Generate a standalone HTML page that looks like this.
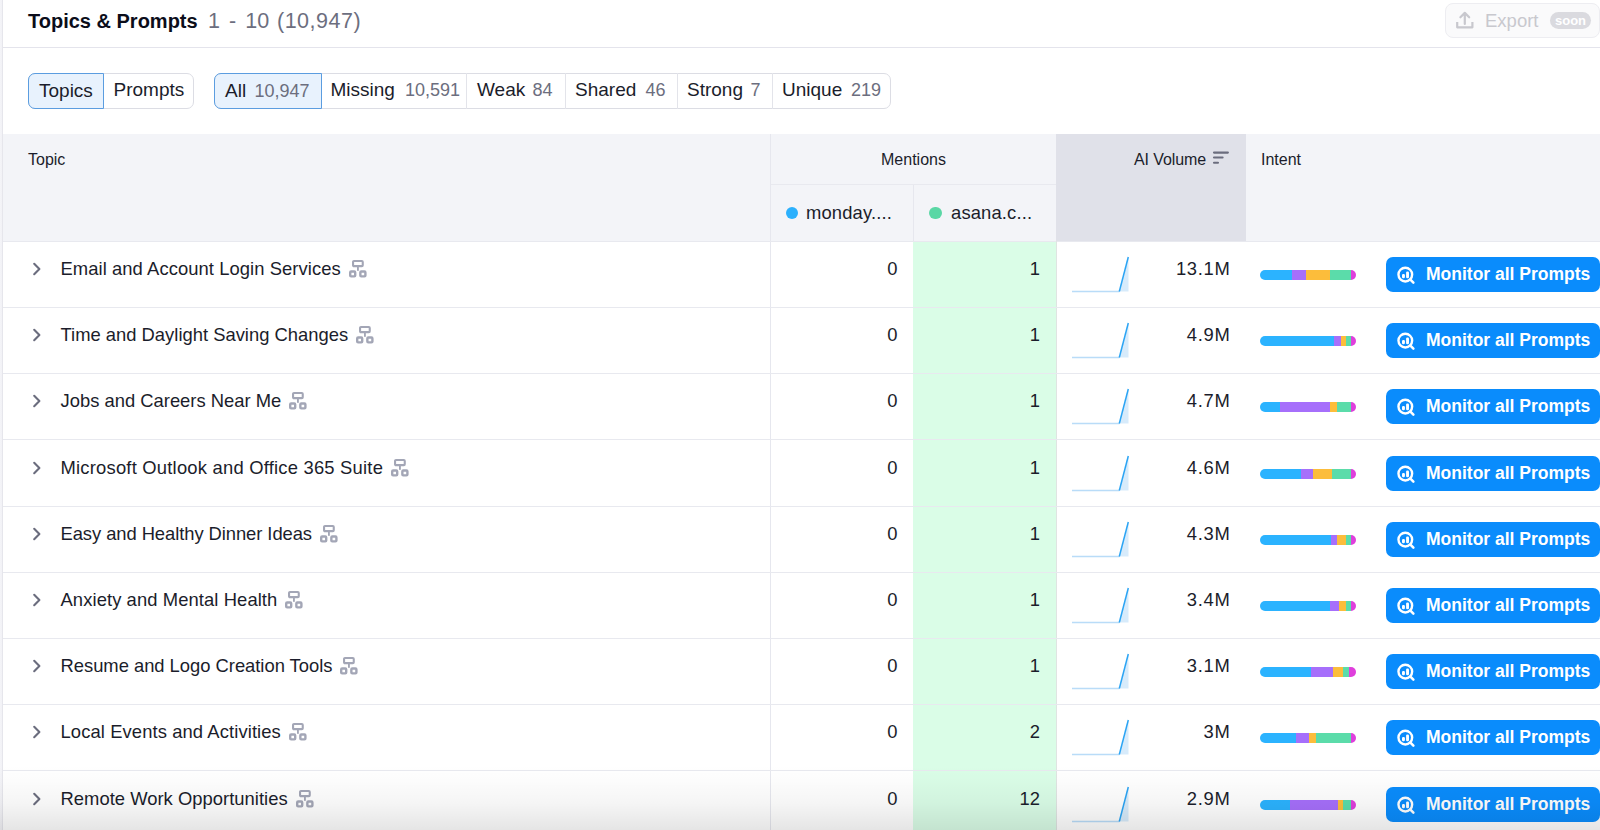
<!DOCTYPE html>
<html><head><meta charset="utf-8">
<style>
*{box-sizing:border-box;margin:0;padding:0}
html,body{width:1600px;height:830px;overflow:hidden;background:#fff}
body{position:relative;font-family:"Liberation Sans",sans-serif;color:#1b1d2b}
.abs{position:absolute}
.lstrip{left:0;top:0;width:3px;height:830px;background:linear-gradient(90deg,#f4f4f8 0,#f2f2f6 2px,#e6e6ec 2px,#e6e6ec 3px);z-index:5}
.title{left:28px;top:6px;font-size:20px;font-weight:bold;line-height:30px;white-space:nowrap;color:#0b0d1a}
.cnt{left:208px;top:6px;font-size:21.5px;line-height:30px;white-space:nowrap;color:#6c6e7e;word-spacing:3.1px}
.cnt b{font-weight:normal;margin-left:-1.3px;letter-spacing:0.5px}
.hline{left:3px;top:47px;width:1597px;height:1px;background:#e4e4ec}
.export{left:1445px;top:3px;width:155px;height:35px;border:1px solid #ededf1;border-radius:8px;background:#fafafb}
.export .ex{position:absolute;left:39px;top:4px;font-size:18.5px;line-height:26px;color:#c8c8ce}
.export .soon{position:absolute;left:104px;top:8px;width:41px;height:17px;border-radius:9px;background:#dadadf;color:#fff;font-size:13px;font-weight:bold;line-height:17px;text-align:center}
.export svg{position:absolute;left:9.2px;top:6.4px}
.seg{top:73px;height:36px;border:1px solid #dcdde4;border-radius:7px;background:#fff}
.seg div{position:absolute;top:-1px;height:36px;line-height:34.4px;font-size:19px;color:#1b1d2b;white-space:nowrap;border-left:1px solid #e3e4ea;padding:0 0 0 10px}
.seg div.first{border-left:none}
.seg div.on{background:#e8f2fd;border:1px solid #5b9de0;border-radius:7px 0 0 7px;padding-left:10px}
.seg span{position:absolute;top:0;font-size:18px;color:#6c6e7e}
.thead{left:3px;top:134px;width:1597px;height:107px;background:#f3f4f8}
.thvol{left:1056px;top:134px;width:190px;height:107px;background:#e0e1e9}
.th{top:150.5px;font-size:16px;line-height:18px;color:#1b1d2b;white-space:nowrap}
.vl{width:1px;background:#e6e7ee}
.hl{height:1px;background:#e8e9ef}
.dot{width:12.6px;height:12.6px;border-radius:50%}
.sub{top:202px;font-size:18.4px;line-height:22px;letter-spacing:0.15px;color:#1b1d2b;white-space:nowrap}
.green{left:913px;top:242px;width:143px;height:600px;background:#dafde7}
.row{position:absolute;left:3px;width:1597px;height:66px}
.row .chev{position:absolute;left:28.5px;top:21.3px}
.row .ttl{position:absolute;left:57.5px;top:16.6px;font-size:18.4px;line-height:22px;letter-spacing:0.07px;white-space:nowrap;color:#1b1d2b}
.row .net{display:inline-block;vertical-align:top;margin-left:8px;margin-top:2.5px}
.row .n1{position:absolute;right:calc(1597px - 894.5px);top:16.6px;font-size:18.4px;line-height:22px}
.row .n2{position:absolute;right:calc(1597px - 1037px);top:16.6px;font-size:18.4px;line-height:22px}
.row .spark{position:absolute;left:1069px;top:15px}
.row .vol{position:absolute;right:calc(1597px - 1227.5px);top:16.6px;font-size:18.4px;line-height:22px;letter-spacing:0.7px}
.row .bar{position:absolute;left:1257.3px;top:28.5px;width:96px;height:10px;border-radius:5px;overflow:hidden;display:flex}
.row .bar i{display:block;height:10px}
.row .btn{position:absolute;left:1383px;top:16px;width:214px;height:35px;border-radius:7px;background:#0a8cfc;color:#fff}
.row .btn span{position:absolute;left:40px;top:6px;font-size:17.5px;line-height:22px;font-weight:bold;white-space:nowrap}
.row .btn .mic{position:absolute;left:11px;top:8.5px}
.shade{position:absolute;left:0;top:765px;width:1600px;height:65px;background:linear-gradient(180deg,rgba(0,0,0,0) 0,rgba(0,0,0,0.012) 15px,rgba(0,0,0,0.04) 38px,rgba(0,0,0,0.1) 65px);z-index:10}
</style></head><body>
<div class="abs lstrip"></div>
<div class="abs title">Topics &amp; Prompts</div>
<div class="abs cnt">1 - 10 <b>(10,947)</b></div>
<div class="abs export"><svg width="20" height="20" viewBox="0 0 20 20"><path d="M9.8 14 V3 M5.4 7.3 L9.8 2.9 L14.2 7.3" fill="none" stroke="#c8c8ce" stroke-width="2.2" stroke-linecap="round" stroke-linejoin="round"/><path d="M2.2 12 V17.3 H17.4 V12" fill="none" stroke="#c8c8ce" stroke-width="2.2" stroke-linejoin="round"/></svg><div class="ex">Export</div><div class="soon">soon</div></div>
<div class="abs hline"></div>
<div class="abs seg" style="left:28px;width:166px">
<div class="on first" style="left:-1px;width:76px">Topics</div>
<div style="left:75px;width:90px;padding-left:9.5px;border-left:none">Prompts</div>
</div>
<div class="abs seg" style="left:214px;width:677px">
<div class="on first" style="left:-1px;width:107.5px">All<span style="left:39.5px">10,947</span></div>
<div style="left:106px;width:145px;padding-left:9.5px;border-left:none">Missing<span style="left:84px">10,591</span></div>
<div style="left:251px;width:99px">Weak<span style="left:65.5px">84</span></div>
<div style="left:350px;width:112px;padding-left:9px">Shared<span style="left:79.5px">46</span></div>
<div style="left:462px;width:95px;padding-left:9px">Strong<span style="left:72.5px">7</span></div>
<div style="left:557px;width:119px;padding-left:9px">Unique<span style="left:78px">219</span></div>
</div>
<div class="abs thead"></div>
<div class="abs thvol"></div>
<div class="abs hl" style="left:770px;top:184px;width:286px"></div>
<div class="abs vl" style="left:770px;top:134px;height:700px"></div>
<div class="abs vl" style="left:913px;top:185px;height:56px"></div>
<div class="abs th" style="left:28px">Topic</div>
<div class="abs th" style="left:881px">Mentions</div>
<div class="abs th" style="left:1134px;letter-spacing:-0.1px">AI Volume</div>
<svg class="abs" style="left:1211.5px;top:149.5px" width="18" height="16" viewBox="0 0 18 16"><path d="M2 2.6 H15.9 M2 7.5 H10.6 M2 12.8 H6" stroke="#6b6d7e" stroke-width="2.1" stroke-linecap="round"/></svg>
<div class="abs th" style="left:1261px">Intent</div>
<div class="abs dot" style="left:785.8px;top:206.9px;background:#2bb0fd"></div>
<div class="abs sub" style="left:806px">monday....</div>
<div class="abs dot" style="left:929px;top:206.9px;background:#5ad7a5"></div>
<div class="abs sub" style="left:951px">asana.c...</div>
<div class="abs hl" style="left:3px;top:241px;width:1597px"></div>
<div class="abs green"></div>
<div class="abs vl" style="left:1056px;top:241px;height:600px;background:#dfe5e2"></div>
<div class="hl abs" style="left:3px;width:1597px;top:307px"></div><div class="row" style="top:241px"><svg class="chev" width="10" height="14" viewBox="0 0 10 14"><path d="M2.2 1.8 L7.4 7 L2.2 12.2" fill="none" stroke="#6b6d7e" stroke-width="2.1" stroke-linecap="round" stroke-linejoin="round"/></svg><div class="ttl" style="letter-spacing:0.070px">Email and Account Login Services<svg class="net" width="18" height="18" viewBox="0 0 18 18"><g fill="none" stroke="#a3a6b6"><rect x="4.05" y="1.05" width="9.7" height="5.1" rx="0.9" stroke-width="2.1"/><rect x="1.2" y="11.55" width="5" height="4.85" rx="0.9" stroke-width="2.4"/><rect x="11.35" y="11.55" width="5.05" height="4.85" rx="0.9" stroke-width="2.4"/></g><rect x="8" y="7" width="1.85" height="3.8" fill="#a3a6b6"/></svg></div><div class="n1">0</div><div class="n2">1</div><svg class="spark" width="60" height="40" viewBox="0 0 60 40"><path d="M47.5 35.5 L56.5 1 L56.5 35.5 Z" fill="#d7ebfb"/><path d="M0 35.5 H47.5" stroke="#b9dcf8" stroke-width="1.3" fill="none"/><path d="M47.3 35.5 L56.3 1" stroke="#2ba4f4" stroke-width="1.5" fill="none"/></svg><div class="vol">13.1M</div><div class="bar"><i style="width:31.5px;background:#2bb3ff"></i><i style="width:14.5px;background:#a66ffb"></i><i style="width:24.0px;background:#fcbd3b"></i><i style="width:20.5px;background:#5bdcaa"></i><i style="flex:1;background:#df3fdc"></i></div><div class="btn"><svg class="mic" width="20" height="20" viewBox="0 0 20 20"><circle cx="8.3" cy="8.6" r="6.85" fill="none" stroke="#fff" stroke-width="2.4"/><path d="M13.4 13.6 L16.4 16.7" stroke="#fff" stroke-width="2.5" stroke-linecap="round"/><rect x="5" y="8.1" width="2.9" height="4.1" rx="1.2" fill="#fff"/><rect x="9.1" y="5.6" width="2.9" height="6.6" rx="1.2" fill="#fff"/></svg><span>Monitor all Prompts</span></div></div>
<div class="hl abs" style="left:3px;width:1597px;top:373px"></div><div class="row" style="top:307px"><svg class="chev" width="10" height="14" viewBox="0 0 10 14"><path d="M2.2 1.8 L7.4 7 L2.2 12.2" fill="none" stroke="#6b6d7e" stroke-width="2.1" stroke-linecap="round" stroke-linejoin="round"/></svg><div class="ttl" style="letter-spacing:-0.000px">Time and Daylight Saving Changes<svg class="net" width="18" height="18" viewBox="0 0 18 18"><g fill="none" stroke="#a3a6b6"><rect x="4.05" y="1.05" width="9.7" height="5.1" rx="0.9" stroke-width="2.1"/><rect x="1.2" y="11.55" width="5" height="4.85" rx="0.9" stroke-width="2.4"/><rect x="11.35" y="11.55" width="5.05" height="4.85" rx="0.9" stroke-width="2.4"/></g><rect x="8" y="7" width="1.85" height="3.8" fill="#a3a6b6"/></svg></div><div class="n1">0</div><div class="n2">1</div><svg class="spark" width="60" height="40" viewBox="0 0 60 40"><path d="M47.5 35.5 L56.5 1 L56.5 35.5 Z" fill="#d7ebfb"/><path d="M0 35.5 H47.5" stroke="#b9dcf8" stroke-width="1.3" fill="none"/><path d="M47.3 35.5 L56.3 1" stroke="#2ba4f4" stroke-width="1.5" fill="none"/></svg><div class="vol">4.9M</div><div class="bar"><i style="width:74.0px;background:#2bb3ff"></i><i style="width:6.3px;background:#a66ffb"></i><i style="width:5.4px;background:#fcbd3b"></i><i style="width:5.2px;background:#5bdcaa"></i><i style="flex:1;background:#df3fdc"></i></div><div class="btn"><svg class="mic" width="20" height="20" viewBox="0 0 20 20"><circle cx="8.3" cy="8.6" r="6.85" fill="none" stroke="#fff" stroke-width="2.4"/><path d="M13.4 13.6 L16.4 16.7" stroke="#fff" stroke-width="2.5" stroke-linecap="round"/><rect x="5" y="8.1" width="2.9" height="4.1" rx="1.2" fill="#fff"/><rect x="9.1" y="5.6" width="2.9" height="6.6" rx="1.2" fill="#fff"/></svg><span>Monitor all Prompts</span></div></div>
<div class="hl abs" style="left:3px;width:1597px;top:439px"></div><div class="row" style="top:373px"><svg class="chev" width="10" height="14" viewBox="0 0 10 14"><path d="M2.2 1.8 L7.4 7 L2.2 12.2" fill="none" stroke="#6b6d7e" stroke-width="2.1" stroke-linecap="round" stroke-linejoin="round"/></svg><div class="ttl" style="letter-spacing:0.000px">Jobs and Careers Near Me<svg class="net" width="18" height="18" viewBox="0 0 18 18"><g fill="none" stroke="#a3a6b6"><rect x="4.05" y="1.05" width="9.7" height="5.1" rx="0.9" stroke-width="2.1"/><rect x="1.2" y="11.55" width="5" height="4.85" rx="0.9" stroke-width="2.4"/><rect x="11.35" y="11.55" width="5.05" height="4.85" rx="0.9" stroke-width="2.4"/></g><rect x="8" y="7" width="1.85" height="3.8" fill="#a3a6b6"/></svg></div><div class="n1">0</div><div class="n2">1</div><svg class="spark" width="60" height="40" viewBox="0 0 60 40"><path d="M47.5 35.5 L56.5 1 L56.5 35.5 Z" fill="#d7ebfb"/><path d="M0 35.5 H47.5" stroke="#b9dcf8" stroke-width="1.3" fill="none"/><path d="M47.3 35.5 L56.3 1" stroke="#2ba4f4" stroke-width="1.5" fill="none"/></svg><div class="vol">4.7M</div><div class="bar"><i style="width:20.0px;background:#2bb3ff"></i><i style="width:49.5px;background:#a66ffb"></i><i style="width:7.4px;background:#fcbd3b"></i><i style="width:13.8px;background:#5bdcaa"></i><i style="flex:1;background:#df3fdc"></i></div><div class="btn"><svg class="mic" width="20" height="20" viewBox="0 0 20 20"><circle cx="8.3" cy="8.6" r="6.85" fill="none" stroke="#fff" stroke-width="2.4"/><path d="M13.4 13.6 L16.4 16.7" stroke="#fff" stroke-width="2.5" stroke-linecap="round"/><rect x="5" y="8.1" width="2.9" height="4.1" rx="1.2" fill="#fff"/><rect x="9.1" y="5.6" width="2.9" height="6.6" rx="1.2" fill="#fff"/></svg><span>Monitor all Prompts</span></div></div>
<div class="hl abs" style="left:3px;width:1597px;top:506px"></div><div class="row" style="top:440px"><svg class="chev" width="10" height="14" viewBox="0 0 10 14"><path d="M2.2 1.8 L7.4 7 L2.2 12.2" fill="none" stroke="#6b6d7e" stroke-width="2.1" stroke-linecap="round" stroke-linejoin="round"/></svg><div class="ttl" style="letter-spacing:0.213px">Microsoft Outlook and Office 365 Suite<svg class="net" width="18" height="18" viewBox="0 0 18 18"><g fill="none" stroke="#a3a6b6"><rect x="4.05" y="1.05" width="9.7" height="5.1" rx="0.9" stroke-width="2.1"/><rect x="1.2" y="11.55" width="5" height="4.85" rx="0.9" stroke-width="2.4"/><rect x="11.35" y="11.55" width="5.05" height="4.85" rx="0.9" stroke-width="2.4"/></g><rect x="8" y="7" width="1.85" height="3.8" fill="#a3a6b6"/></svg></div><div class="n1">0</div><div class="n2">1</div><svg class="spark" width="60" height="40" viewBox="0 0 60 40"><path d="M47.5 35.5 L56.5 1 L56.5 35.5 Z" fill="#d7ebfb"/><path d="M0 35.5 H47.5" stroke="#b9dcf8" stroke-width="1.3" fill="none"/><path d="M47.3 35.5 L56.3 1" stroke="#2ba4f4" stroke-width="1.5" fill="none"/></svg><div class="vol">4.6M</div><div class="bar"><i style="width:40.4px;background:#2bb3ff"></i><i style="width:12.5px;background:#a66ffb"></i><i style="width:19.1px;background:#fcbd3b"></i><i style="width:18.8px;background:#5bdcaa"></i><i style="flex:1;background:#df3fdc"></i></div><div class="btn"><svg class="mic" width="20" height="20" viewBox="0 0 20 20"><circle cx="8.3" cy="8.6" r="6.85" fill="none" stroke="#fff" stroke-width="2.4"/><path d="M13.4 13.6 L16.4 16.7" stroke="#fff" stroke-width="2.5" stroke-linecap="round"/><rect x="5" y="8.1" width="2.9" height="4.1" rx="1.2" fill="#fff"/><rect x="9.1" y="5.6" width="2.9" height="6.6" rx="1.2" fill="#fff"/></svg><span>Monitor all Prompts</span></div></div>
<div class="hl abs" style="left:3px;width:1597px;top:572px"></div><div class="row" style="top:506px"><svg class="chev" width="10" height="14" viewBox="0 0 10 14"><path d="M2.2 1.8 L7.4 7 L2.2 12.2" fill="none" stroke="#6b6d7e" stroke-width="2.1" stroke-linecap="round" stroke-linejoin="round"/></svg><div class="ttl" style="letter-spacing:-0.070px">Easy and Healthy Dinner Ideas<svg class="net" width="18" height="18" viewBox="0 0 18 18"><g fill="none" stroke="#a3a6b6"><rect x="4.05" y="1.05" width="9.7" height="5.1" rx="0.9" stroke-width="2.1"/><rect x="1.2" y="11.55" width="5" height="4.85" rx="0.9" stroke-width="2.4"/><rect x="11.35" y="11.55" width="5.05" height="4.85" rx="0.9" stroke-width="2.4"/></g><rect x="8" y="7" width="1.85" height="3.8" fill="#a3a6b6"/></svg></div><div class="n1">0</div><div class="n2">1</div><svg class="spark" width="60" height="40" viewBox="0 0 60 40"><path d="M47.5 35.5 L56.5 1 L56.5 35.5 Z" fill="#d7ebfb"/><path d="M0 35.5 H47.5" stroke="#b9dcf8" stroke-width="1.3" fill="none"/><path d="M47.3 35.5 L56.3 1" stroke="#2ba4f4" stroke-width="1.5" fill="none"/></svg><div class="vol">4.3M</div><div class="bar"><i style="width:71.2px;background:#2bb3ff"></i><i style="width:5.6px;background:#a66ffb"></i><i style="width:8.8px;background:#fcbd3b"></i><i style="width:5.2px;background:#5bdcaa"></i><i style="flex:1;background:#df3fdc"></i></div><div class="btn"><svg class="mic" width="20" height="20" viewBox="0 0 20 20"><circle cx="8.3" cy="8.6" r="6.85" fill="none" stroke="#fff" stroke-width="2.4"/><path d="M13.4 13.6 L16.4 16.7" stroke="#fff" stroke-width="2.5" stroke-linecap="round"/><rect x="5" y="8.1" width="2.9" height="4.1" rx="1.2" fill="#fff"/><rect x="9.1" y="5.6" width="2.9" height="6.6" rx="1.2" fill="#fff"/></svg><span>Monitor all Prompts</span></div></div>
<div class="hl abs" style="left:3px;width:1597px;top:638px"></div><div class="row" style="top:572px"><svg class="chev" width="10" height="14" viewBox="0 0 10 14"><path d="M2.2 1.8 L7.4 7 L2.2 12.2" fill="none" stroke="#6b6d7e" stroke-width="2.1" stroke-linecap="round" stroke-linejoin="round"/></svg><div class="ttl" style="letter-spacing:0.088px">Anxiety and Mental Health<svg class="net" width="18" height="18" viewBox="0 0 18 18"><g fill="none" stroke="#a3a6b6"><rect x="4.05" y="1.05" width="9.7" height="5.1" rx="0.9" stroke-width="2.1"/><rect x="1.2" y="11.55" width="5" height="4.85" rx="0.9" stroke-width="2.4"/><rect x="11.35" y="11.55" width="5.05" height="4.85" rx="0.9" stroke-width="2.4"/></g><rect x="8" y="7" width="1.85" height="3.8" fill="#a3a6b6"/></svg></div><div class="n1">0</div><div class="n2">1</div><svg class="spark" width="60" height="40" viewBox="0 0 60 40"><path d="M47.5 35.5 L56.5 1 L56.5 35.5 Z" fill="#d7ebfb"/><path d="M0 35.5 H47.5" stroke="#b9dcf8" stroke-width="1.3" fill="none"/><path d="M47.3 35.5 L56.3 1" stroke="#2ba4f4" stroke-width="1.5" fill="none"/></svg><div class="vol">3.4M</div><div class="bar"><i style="width:69.3px;background:#2bb3ff"></i><i style="width:9.4px;background:#a66ffb"></i><i style="width:6.9px;background:#fcbd3b"></i><i style="width:5.2px;background:#5bdcaa"></i><i style="flex:1;background:#df3fdc"></i></div><div class="btn"><svg class="mic" width="20" height="20" viewBox="0 0 20 20"><circle cx="8.3" cy="8.6" r="6.85" fill="none" stroke="#fff" stroke-width="2.4"/><path d="M13.4 13.6 L16.4 16.7" stroke="#fff" stroke-width="2.5" stroke-linecap="round"/><rect x="5" y="8.1" width="2.9" height="4.1" rx="1.2" fill="#fff"/><rect x="9.1" y="5.6" width="2.9" height="6.6" rx="1.2" fill="#fff"/></svg><span>Monitor all Prompts</span></div></div>
<div class="hl abs" style="left:3px;width:1597px;top:704px"></div><div class="row" style="top:638px"><svg class="chev" width="10" height="14" viewBox="0 0 10 14"><path d="M2.2 1.8 L7.4 7 L2.2 12.2" fill="none" stroke="#6b6d7e" stroke-width="2.1" stroke-linecap="round" stroke-linejoin="round"/></svg><div class="ttl" style="letter-spacing:-0.024px">Resume and Logo Creation Tools<svg class="net" width="18" height="18" viewBox="0 0 18 18"><g fill="none" stroke="#a3a6b6"><rect x="4.05" y="1.05" width="9.7" height="5.1" rx="0.9" stroke-width="2.1"/><rect x="1.2" y="11.55" width="5" height="4.85" rx="0.9" stroke-width="2.4"/><rect x="11.35" y="11.55" width="5.05" height="4.85" rx="0.9" stroke-width="2.4"/></g><rect x="8" y="7" width="1.85" height="3.8" fill="#a3a6b6"/></svg></div><div class="n1">0</div><div class="n2">1</div><svg class="spark" width="60" height="40" viewBox="0 0 60 40"><path d="M47.5 35.5 L56.5 1 L56.5 35.5 Z" fill="#d7ebfb"/><path d="M0 35.5 H47.5" stroke="#b9dcf8" stroke-width="1.3" fill="none"/><path d="M47.3 35.5 L56.3 1" stroke="#2ba4f4" stroke-width="1.5" fill="none"/></svg><div class="vol">3.1M</div><div class="bar"><i style="width:51.0px;background:#2bb3ff"></i><i style="width:21.5px;background:#a66ffb"></i><i style="width:10.6px;background:#fcbd3b"></i><i style="width:5.2px;background:#5bdcaa"></i><i style="flex:1;background:#df3fdc"></i></div><div class="btn"><svg class="mic" width="20" height="20" viewBox="0 0 20 20"><circle cx="8.3" cy="8.6" r="6.85" fill="none" stroke="#fff" stroke-width="2.4"/><path d="M13.4 13.6 L16.4 16.7" stroke="#fff" stroke-width="2.5" stroke-linecap="round"/><rect x="5" y="8.1" width="2.9" height="4.1" rx="1.2" fill="#fff"/><rect x="9.1" y="5.6" width="2.9" height="6.6" rx="1.2" fill="#fff"/></svg><span>Monitor all Prompts</span></div></div>
<div class="hl abs" style="left:3px;width:1597px;top:770px"></div><div class="row" style="top:704px"><svg class="chev" width="10" height="14" viewBox="0 0 10 14"><path d="M2.2 1.8 L7.4 7 L2.2 12.2" fill="none" stroke="#6b6d7e" stroke-width="2.1" stroke-linecap="round" stroke-linejoin="round"/></svg><div class="ttl" style="letter-spacing:0.098px">Local Events and Activities<svg class="net" width="18" height="18" viewBox="0 0 18 18"><g fill="none" stroke="#a3a6b6"><rect x="4.05" y="1.05" width="9.7" height="5.1" rx="0.9" stroke-width="2.1"/><rect x="1.2" y="11.55" width="5" height="4.85" rx="0.9" stroke-width="2.4"/><rect x="11.35" y="11.55" width="5.05" height="4.85" rx="0.9" stroke-width="2.4"/></g><rect x="8" y="7" width="1.85" height="3.8" fill="#a3a6b6"/></svg></div><div class="n1">0</div><div class="n2">2</div><svg class="spark" width="60" height="40" viewBox="0 0 60 40"><path d="M47.5 35.5 L56.5 1 L56.5 35.5 Z" fill="#d7ebfb"/><path d="M0 35.5 H47.5" stroke="#b9dcf8" stroke-width="1.3" fill="none"/><path d="M47.3 35.5 L56.3 1" stroke="#2ba4f4" stroke-width="1.5" fill="none"/></svg><div class="vol">3M</div><div class="bar"><i style="width:35.6px;background:#2bb3ff"></i><i style="width:13.2px;background:#a66ffb"></i><i style="width:7.1px;background:#fcbd3b"></i><i style="width:34.9px;background:#5bdcaa"></i><i style="flex:1;background:#df3fdc"></i></div><div class="btn"><svg class="mic" width="20" height="20" viewBox="0 0 20 20"><circle cx="8.3" cy="8.6" r="6.85" fill="none" stroke="#fff" stroke-width="2.4"/><path d="M13.4 13.6 L16.4 16.7" stroke="#fff" stroke-width="2.5" stroke-linecap="round"/><rect x="5" y="8.1" width="2.9" height="4.1" rx="1.2" fill="#fff"/><rect x="9.1" y="5.6" width="2.9" height="6.6" rx="1.2" fill="#fff"/></svg><span>Monitor all Prompts</span></div></div>
<div class="hl abs" style="left:3px;width:1597px;top:836px"></div><div class="row" style="top:771px"><svg class="chev" width="10" height="14" viewBox="0 0 10 14"><path d="M2.2 1.8 L7.4 7 L2.2 12.2" fill="none" stroke="#6b6d7e" stroke-width="2.1" stroke-linecap="round" stroke-linejoin="round"/></svg><div class="ttl" style="letter-spacing:0.021px">Remote Work Opportunities<svg class="net" width="18" height="18" viewBox="0 0 18 18"><g fill="none" stroke="#a3a6b6"><rect x="4.05" y="1.05" width="9.7" height="5.1" rx="0.9" stroke-width="2.1"/><rect x="1.2" y="11.55" width="5" height="4.85" rx="0.9" stroke-width="2.4"/><rect x="11.35" y="11.55" width="5.05" height="4.85" rx="0.9" stroke-width="2.4"/></g><rect x="8" y="7" width="1.85" height="3.8" fill="#a3a6b6"/></svg></div><div class="n1">0</div><div class="n2">12</div><svg class="spark" width="60" height="40" viewBox="0 0 60 40"><path d="M47.5 35.5 L56.5 1 L56.5 35.5 Z" fill="#d7ebfb"/><path d="M0 35.5 H47.5" stroke="#b9dcf8" stroke-width="1.3" fill="none"/><path d="M47.3 35.5 L56.3 1" stroke="#2ba4f4" stroke-width="1.5" fill="none"/></svg><div class="vol">2.9M</div><div class="bar"><i style="width:29.4px;background:#2bb3ff"></i><i style="width:48.2px;background:#a66ffb"></i><i style="width:5.5px;background:#fcbd3b"></i><i style="width:7.7px;background:#5bdcaa"></i><i style="flex:1;background:#df3fdc"></i></div><div class="btn"><svg class="mic" width="20" height="20" viewBox="0 0 20 20"><circle cx="8.3" cy="8.6" r="6.85" fill="none" stroke="#fff" stroke-width="2.4"/><path d="M13.4 13.6 L16.4 16.7" stroke="#fff" stroke-width="2.5" stroke-linecap="round"/><rect x="5" y="8.1" width="2.9" height="4.1" rx="1.2" fill="#fff"/><rect x="9.1" y="5.6" width="2.9" height="6.6" rx="1.2" fill="#fff"/></svg><span>Monitor all Prompts</span></div></div>
<div class="shade"></div>
</body></html>
